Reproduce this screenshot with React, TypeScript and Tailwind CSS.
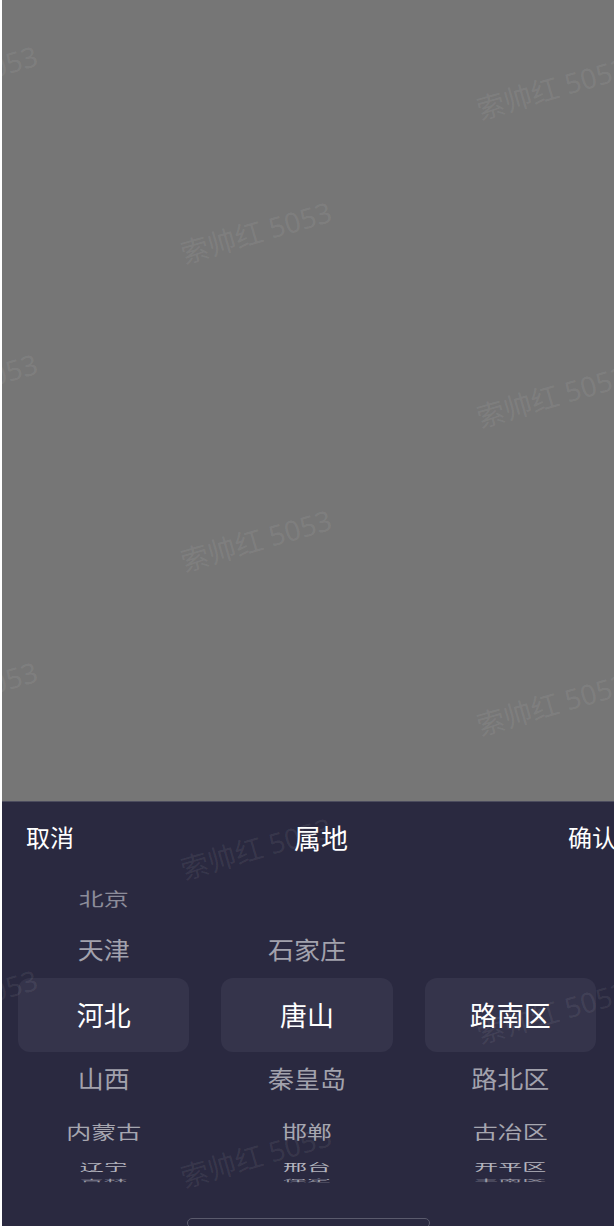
import React from "react";

const CJK = "font-['Noto_Sans','Noto_Sans_CJK_SC',sans-serif]";

// wheel columns: null = empty slot
const COLUMNS: (string | null)[][] = [
  ["北京", "天津", "河北", "山西", "内蒙古", "辽宁", "吉林"],
  [null, "石家庄", "唐山", "秦皇岛", "邯郸", "邢台", "保定"],
  [null, null, "路南区", "路北区", "古冶区", "开平区", "丰南区"],
];

// per-slot look of the 3D wheel
const SLOTS = [
  { h: "h-[48px]", text: "text-[25px] text-[#8c8c9a] scale-y-[0.74]" },
  { h: "h-[56px]", text: "text-[26px] text-[#a2a2ad] scale-y-[0.92]" },
  { h: "h-[74px]", text: "text-[27px] text-white" },
  { h: "h-[54px]", text: "text-[26px] text-[#a2a2ad] scale-y-[0.92]" },
  { h: "h-[52px]", text: "text-[25px] text-[#a6a6b0] scale-y-[0.72]" },
  { h: "h-[18px]", text: "text-[24px] text-[#b4b4be] scale-y-[0.42]" },
  { h: "h-[10px]", text: "text-[24px] text-[#9a9aa6] scale-y-[0.14]" },
];

// watermark centers
const MARKS = [
  [-38, 76], [552, 88], [256, 232],
  [-38, 384], [552, 396], [256, 540],
  [-38, 692], [552, 704], [256, 848],
  [-38, 1000], [552, 1012], [256, 1156],
];

function Wheel({ items }: { items: (string | null)[] }) {
  return (
    <div className="flex flex-col">
      {items.map((it, i) => {
        const s = SLOTS[i];
        const sel = i === 2;
        return (
          <div
            key={i}
            className={`${s.h} flex items-center justify-center overflow-visible ${
              sel ? "mx-4 rounded-[12px] bg-[#35344b]" : ""
            }`}
          >
            {it && <span className={`${s.text} leading-none whitespace-nowrap inline-block`}>{it}</span>}
          </div>
        );
      })}
    </div>
  );
}

export default function App() {
  return (
    <div className={`relative h-[1226px] w-[614px] overflow-hidden bg-white pl-[2px] ${CJK}`}>
      <div className="h-[801px] bg-[#767676]" />
      <div className="h-[425px] border-t border-[#4c4c5e] bg-[#2a2940]">
        <div className="flex h-[72px] w-[638px] items-center justify-between px-6">
          <span className="text-[24px] text-white">取消</span>
          <span className="mt-[3px] text-[27px] text-white">属地</span>
          <span className="text-[24px] text-white">确认</span>
        </div>
        <div className="grid w-[610px] grid-cols-3">
          {COLUMNS.map((c, i) => (
            <Wheel key={i} items={c} />
          ))}
        </div>
        <div className="flex w-[612px] justify-center pt-[32px]">
          <div className="h-[10px] w-[243px] rounded-[5px] border border-[#5a5a6c]" />
        </div>
      </div>
      {MARKS.map(([x, y], i) => (
        <span
          key={i}
          className="pointer-events-none absolute w-[166px] -rotate-[16deg] whitespace-nowrap text-center text-[28px] leading-[34px] text-white/[0.075]"
          style={{ left: x - 83, top: y - 17 }}
        >
          索帅红 5053
        </span>
      ))}
    </div>
  );
}
